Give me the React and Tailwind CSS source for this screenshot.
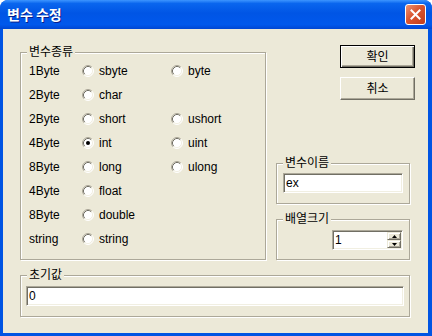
const rows = [
  ['1Byte', 'sbyte', 'byte'],
  ['2Byte', 'char', null],
  ['2Byte', 'short', 'ushort'],
  ['4Byte', 'int', 'uint'],
  ['8Byte', 'long', 'ulong'],
  ['4Byte', 'float', null],
  ['8Byte', 'double', null],
  ['string', 'string', null],
]

function Radio({ checked }) {
  return (
    <svg width="12" height="12" viewBox="0 0 12 12" className="shrink-0">
      <circle cx="6" cy="6" r="5" fill="#fff" />
      <path d="M2.11 9.89 A5.5 5.5 0 0 1 9.89 2.11" fill="none" stroke="#ACA899" />
      <path d="M2.82 9.18 A4.5 4.5 0 0 1 9.18 2.82" fill="none" stroke="#716F64" />
      <path d="M9.89 2.11 A5.5 5.5 0 0 1 2.11 9.89" fill="none" stroke="#fff" />
      <path d="M9.18 2.82 A4.5 4.5 0 0 1 2.82 9.18" fill="none" stroke="#F1EFE2" />
      {checked && <circle cx="6" cy="6" r="2" fill="#000" />}
    </svg>
  )
}

function Option({ label, checked }) {
  return (
    <div className="flex items-center gap-[5px]">
      <Radio checked={checked} />
      <span>{label}</span>
    </div>
  )
}

function Group({ label, className = '', children }) {
  return (
    <div className={`relative border border-[#ACA899] shadow-[inset_1px_1px_0_#fff,1px_1px_0_#fff] ${className}`}>
      <span className="absolute -top-[8px] left-[6px] px-[2px] leading-[14px] bg-[#ECE9D8]">{label}</span>
      {children}
    </div>
  )
}

function Edit({ value, className = '', children }) {
  return (
    <div className={`flex h-[20px] bg-white border border-t-[#ACA899] border-l-[#ACA899] border-b-white border-r-white shadow-[inset_1px_1px_0_#716F64,inset_-1px_-1px_0_#F1EFE2] ${className}`}>
      <span className="flex-1 pl-[2px] leading-[18px]">{value}</span>
      {children}
    </div>
  )
}

function SpinButton({ up }) {
  return (
    <div className="w-[14px] h-[8px] flex items-center justify-center bg-[#ECE9D8] border border-t-[#ECE9D8] border-l-[#ECE9D8] border-b-[#716F64] border-r-[#716F64] shadow-[inset_1px_1px_0_#fff,inset_-1px_-1px_0_#ACA899]">
      <svg width="5" height="3" viewBox="0 0 5 3">
        {up ? <path d="M2.5 0 L5 3 L0 3 Z" fill="#000" /> : <path d="M0 0 L5 0 L2.5 3 Z" fill="#000" />}
      </svg>
    </div>
  )
}

export default function App() {
  return (
    <div className="w-[432px] h-[336px] flex flex-col rounded-t-[8px] overflow-hidden bg-[#0054E3] font-['Liberation_Sans','Noto_Sans_CJK_KR',sans-serif] text-[12px] text-black">
      {/* title bar */}
      <div className="h-[29px] shrink-0 flex items-center justify-between pl-[7px] pr-[6px] bg-[linear-gradient(180deg,#3D95FF_0%,#0A66EE_12%,#0055E5_45%,#0058EC_85%,#0046D2_100%)]">
        <span className="text-white font-bold text-[14px] font-['Noto_Sans_CJK_KR',sans-serif] [text-shadow:1px_1px_0_#0A1E8A]">변수 수정</span>
        <div className="w-[21px] h-[21px] rounded-[3px] border border-white flex items-center justify-center bg-[linear-gradient(135deg,#EC9474_0%,#DA5530_45%,#C13D1B_100%)]">
          <svg width="11" height="11" viewBox="0 0 11 11">
            <path d="M1.5 1.5 L9.5 9.5 M9.5 1.5 L1.5 9.5" stroke="#fff" strokeWidth="2" strokeLinecap="square" />
          </svg>
        </div>
      </div>

      {/* client area */}
      <div className="flex-1 ml-[3px] mr-[4px] mb-[3px] bg-[#ECE9D8] pl-[17px] pt-[16px] flex flex-col">
        <div className="flex items-start">
          <Group label="변수종류" className="mt-[7px] w-[246px] h-[208px]">
            <div className="grid grid-cols-[53px_89px_auto] pt-[6px] pl-[8px] leading-[24px]">
              {rows.map((r, i) => [
                <span key={`a${i}`}>{r[0]}</span>,
                <Option key={`b${i}`} label={r[1]} checked={r[1] === 'int'} />,
                r[2] ? <Option key={`c${i}`} label={r[2]} /> : <span key={`c${i}`} />,
              ])}
            </div>
          </Group>

          <div className="ml-[10px] w-[139px] flex flex-col">
            <button className="self-end w-[75px] h-[23px] flex items-center justify-center border border-black bg-[#ECE9D8] shadow-[inset_1px_1px_0_#fff,inset_-1px_-1px_0_#716F64,inset_-2px_-2px_0_#ACA899]">
              확인
            </button>
            <button className="self-end mt-[9px] w-[75px] h-[23px] flex items-center justify-center bg-[#ECE9D8] border border-t-white border-l-white border-b-[#716F64] border-r-[#716F64] shadow-[inset_-1px_-1px_0_#ACA899]">
              취소
            </button>

            <Group label="변수이름" className="mt-[63px] w-[134px] h-[41px] px-[6px] pt-[9px]">
              <Edit value="ex" />
            </Group>

            <Group label="배열크기" className="mt-[15px] w-[134px] h-[41px] pl-[55px] pr-[6px] pt-[10px]">
              <Edit value="1">
                <div className="flex flex-col my-[1px] mr-[1px]">
                  <SpinButton up />
                  <SpinButton />
                </div>
              </Edit>
            </Group>
          </div>
        </div>

        <Group label="초기값" className="mt-[15px] w-[390px] h-[42px] px-[5px] pt-[10px]">
          <Edit value="0" />
        </Group>
      </div>
    </div>
  )
}
